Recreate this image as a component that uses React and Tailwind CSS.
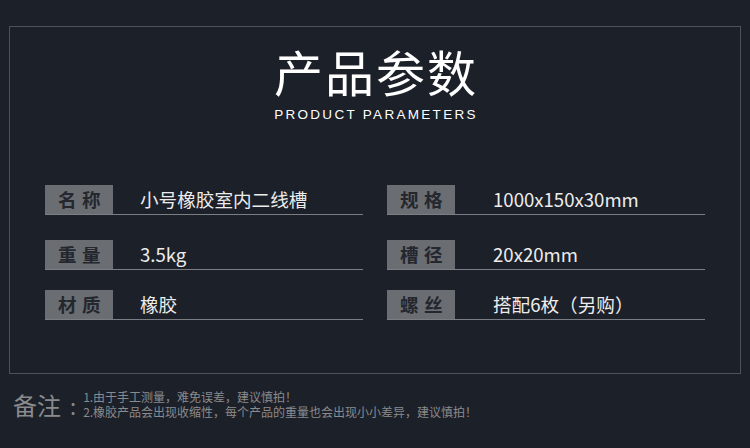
const rows = [
  [
    { label: '名称', value: '小号橡胶室内二线槽' },
    { label: '规格', value: '1000x150x30mm' },
  ],
  [
    { label: '重量', value: '3.5kg' },
    { label: '槽径', value: '20x20mm' },
  ],
  [
    { label: '材质', value: '橡胶' },
    { label: '螺丝', value: '搭配6枚（另购）' },
  ],
]

const cjk = { fontFamily: '"Noto Sans CJK SC", "Noto Sans", sans-serif' }

function ParamRow({ label, value, right }) {
  return (
    <div className="flex h-[30px] items-center border-b border-[#7b7e84]">
      <div className="flex h-[29px] w-[68px] shrink-0 items-center justify-center bg-[#6a6d72] pl-[6px] text-[18.5px] font-bold leading-none tracking-[5.5px] text-[#24272d]">
        {label}
      </div>
      <div className={`${right ? 'pl-[38px]' : 'pl-[27px]'} text-[18.6px] leading-none text-[#ececec]`}>{value}</div>
    </div>
  )
}

export default function App() {
  return (
    <div className="h-[448px] w-[750px] overflow-hidden bg-[#1c2029] px-[9px] pt-[26px]" style={cjk}>
      <div className="h-[348px] border border-[#4d5158] px-[35px] pt-[19px]">
        <div className="flex flex-col items-center">
          <h1 className="pl-[2px] text-[49px] font-normal leading-[50px] tracking-[2px] text-white">产品参数</h1>
          <p
            className="mt-[12px] pl-[2px] text-[13.5px] leading-[14px] tracking-[2.3px] text-white"
            style={{ fontFamily: '"Liberation Sans", Arial, sans-serif' }}
          >
            PRODUCT PARAMETERS
          </p>
        </div>

        <div className="mt-[63px] flex flex-col">
          {rows.map((pair, i) => (
            <div key={i} className={`grid grid-cols-2 gap-x-[24px] ${i === 1 ? 'mt-[25px]' : i === 2 ? 'mt-[20px]' : ''}`}>
              {pair.map((item, j) => (
                <ParamRow key={item.label} right={j === 1} {...item} />
              ))}
            </div>
          ))}
        </div>
      </div>

      <div className="mt-[16px] flex items-center pl-[4px] text-[#8a8b8d]">
        <span className="text-[24px] leading-none">备注</span>
        <span className="ml-[9px] text-[22px] leading-none">:</span>
        <div className="ml-[7px] flex flex-col gap-[1px] text-[12px] leading-[14px]">
          <span>1.由于手工测量，难免误差，建议慎拍！</span>
          <span>2.橡胶产品会出现收缩性，每个产品的重量也会出现小小差异，建议慎拍！</span>
        </div>
      </div>
    </div>
  )
}
